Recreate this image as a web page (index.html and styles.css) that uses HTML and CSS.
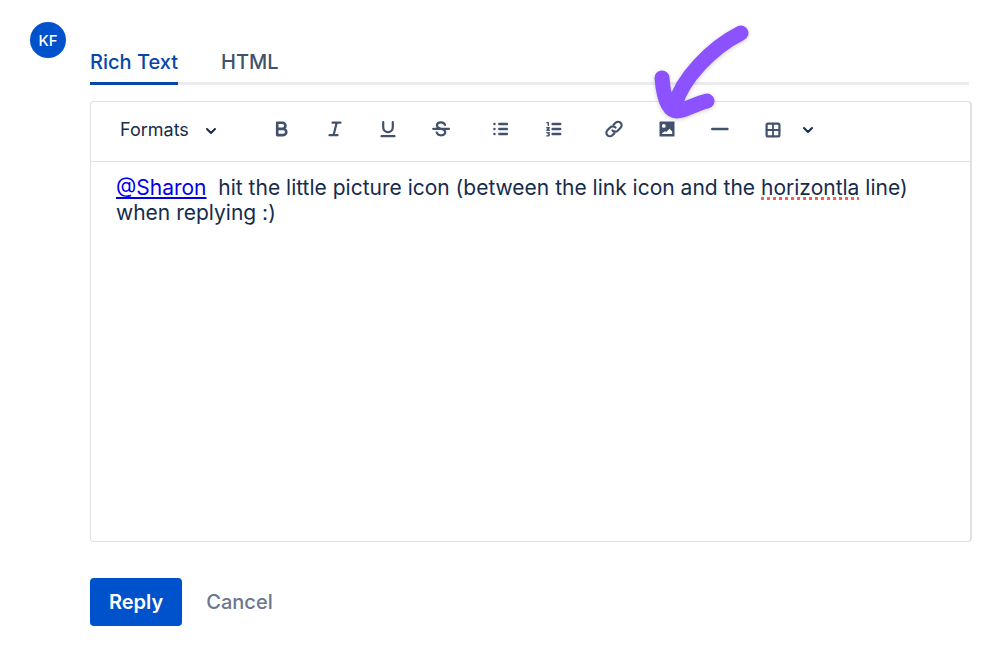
FILE: index.html
```html
<!DOCTYPE html>
<html lang="en">
<head>
<meta charset="UTF-8">
<meta name="viewport" content="width=device-width, initial-scale=1.0">
<title>Reply</title>
<link rel="stylesheet" href="styles.css">
</head>
<body>

<form class="reply">
    <div class="avatar">KF</div>

    <div class="main">
        <div class="tabs" role="tablist">
            <button type="button" class="tab active" role="tab" aria-selected="true">Rich Text</button>
            <button type="button" class="tab" role="tab" aria-selected="false">HTML</button>
        </div>

        <div class="editor">
            <div class="toolbar" role="toolbar" aria-label="Formatting">
                <div class="formats">
                    <select aria-label="Formats">
                        <option>Formats</option>
                    </select>
                    <svg class="chevron" width="12" height="8" viewBox="0 0 12 8"><path d="M2 2l4 4 4-4"/></svg>
                </div>

                <div class="group">
                    <button type="button" class="tool" aria-label="Bold">
                        <svg width="20" height="20" viewBox="0 0 20 20"><path stroke-width="2.6" d="M5.2 3.8h5.3a2.9 2.9 0 0 1 0 5.9H5.2zM5.2 9.9h6a3.1 3.1 0 0 1 0 6.2h-6z"/></svg>
                    </button>
                    <button type="button" class="tool" aria-label="Italic">
                        <svg width="20" height="20" viewBox="0 0 20 20"><path stroke-width="2.2" d="M7.5 3.7h8M4.5 16.2h8M11.7 3.7L8.6 16"/></svg>
                    </button>
                    <button type="button" class="tool" aria-label="Underline">
                        <svg width="20" height="20" viewBox="0 0 20 20"><path stroke-width="2.2" d="M5.2 3v5.3a4.8 4.8 0 0 0 9.6 0V3M3.5 17.2h13"/></svg>
                    </button>
                    <button type="button" class="tool" aria-label="Strikethrough">
                        <svg width="20" height="20" viewBox="0 0 20 20"><path stroke-width="2.2" d="M14 5.9C13.4 4.3 12 3.4 10 3.4c-2.4 0-4 1.2-4 3 0 1.8 1.3 2.7 4 3.4 2.9.8 4.2 1.7 4.2 3.3 0 1.9-1.7 3.2-4.2 3.2-2.1 0-3.7-1-4.3-2.8M2.2 9.8h15.8"/></svg>
                    </button>
                </div>

                <div class="group">
                    <button type="button" class="tool" aria-label="Bullet list">
                        <svg width="20" height="20" viewBox="0 0 20 20"><path stroke-width="2.4" d="M8.3 5h7.6M8.3 10h7.6M8.3 15h7.6M3.4 5h.1M3.4 10h.1M3.4 15h.1"/></svg>
                    </button>
                    <button type="button" class="tool" aria-label="Numbered list">
                        <svg width="20" height="20" viewBox="0 0 20 20"><path stroke-width="2.4" d="M8.6 5h7.6M8.6 10h7.6M8.6 15h7.6"/><path stroke-width="1.4" d="M2.8 3.6h1.5v2.8M2.8 8.8h2.5L2.9 11.2h2.5M2.8 13.6h2.5l-1.2 1.3c1.8 0 1.5 2-.1 2H2.8"/></svg>
                    </button>
                </div>

                <div class="group">
                    <button type="button" class="tool" aria-label="Link">
                        <svg width="20" height="20" viewBox="0 0 24 24"><path stroke-width="2.6" d="M10.2 13.7a4.3 4.3 0 0 0 6.2.3l3.5-3.5a4.2 4.2 0 0 0-6-6L11.5 6.9M13.8 10.3a4.3 4.3 0 0 0-6.2-.3l-3.5 3.5a4.2 4.2 0 0 0 6 6l2.3-2.3"/></svg>
                    </button>
                    <div class="pointed">
                        <button type="button" class="tool" aria-label="Image">
                            <svg width="20" height="20" viewBox="0 0 20 20"><path class="solid" fill-rule="evenodd" d="M3 2.500h14a.5.5 0 0 1 .5.5v14a.5.5 0 0 1-.5.5H3a.5.5 0 0 1-.5-.5V3a.5.5 0 0 1 .5-.5zM6.800 5a1.900 1.900 0 1 0 0 3.800 1.900 1.900 0 0 0 0-3.800zM5 15h10.200v-2.600l-2.600-2.600-3.500 3.200-1.200-.8L5 14.200z"/></svg>
                        </button>
                        <svg class="arrow" width="106" height="106" viewBox="650 20 106 106"><path d="M741 34C711 49 682 80 675 106M662 79C663 92 666 112 677 112C685 112 694 105 707 102"/></svg>
                    </div>
                    <button type="button" class="tool" aria-label="Horizontal line">
                        <svg width="20" height="20" viewBox="0 0 20 20"><path stroke-width="2.4" d="M2.2 10h15.2"/></svg>
                    </button>
                    <button type="button" class="tool" aria-label="Table">
                        <svg width="20" height="20" viewBox="0 0 20 20"><rect x="3.6" y="4.6" width="12.800" height="12.800" rx="1.5" stroke-width="2.2"/><path stroke-width="1.800" d="M10 4.6v12.800M3.6 11h12.800"/></svg>
                    </button>
                    <button type="button" class="more" aria-label="More">
                        <svg class="chevron" width="12" height="8" viewBox="0 0 12 8"><path d="M2 2l4 4 4-4"/></svg>
                    </button>
                </div>
            </div>

            <div class="content" contenteditable="true" spellcheck="false" role="textbox" aria-multiline="true" aria-label="Reply text"><a href="#sharon">@Sharon</a>&nbsp; hit the little picture icon (between the link icon and the <span class="misspelled">horizontla</span> line) when replying :)</div>
        </div>

        <div class="actions">
            <button type="submit" class="button">Reply</button>
            <button type="button" class="cancel">Cancel</button>
        </div>
    </div>
</form>

</body>
</html>
```
FILE: styles.css
```css
* {
    box-sizing: border-box;
}
body {
    margin: 0;
    background-color: #ffffff;
    font-family: Inter, "Liberation Sans", sans-serif;
    color: #172b4d;
}
button, select {
    font-family: inherit;
    background: none;
    border: none;
    padding: 0;
    margin: 0;
    cursor: pointer;
}
.reply {
    display: flex;
    align-items: flex-start;
    gap: 24px;
    padding: 22px 27px 26px 30px;
}
.avatar {
    display: flex;
    justify-content: center;
    align-items: center;
    flex: none;
    width: 36px;
    height: 36px;
    border-radius: 50%;
    background-color: #0052cc;
    color: #ffffff;
    font-size: 15px;
    font-weight: 500;
}
.main {
    flex: 1;
    min-width: 0;
}

/* Tabs */
.tabs {
    display: flex;
    gap: 43px;
    margin: 22px 3px 16px 0;
    box-shadow: inset 0 -3px #ebecf0;
}
.tab {
    height: 41px;
    padding-bottom: 3px;
    border-bottom: 3px solid transparent;
    font-size: 20px;
    font-weight: 500;
    color: #42526e;
}
.tab.active {
    color: #0747a6;
    border-bottom-color: #0747a6;
}

/* Editor */
.editor {
    border: 1px solid #dfe1e6;
    border-right-width: 2px;
    border-radius: 4px;
}
.toolbar {
    display: flex;
    align-items: center;
    gap: 7px;
    height: 60px;
    padding: 0 29px 5px;
    border-bottom: 1px solid #dfe1e6;
}
.formats {
    display: grid;
    align-items: center;
    width: 97px;
    margin-right: 31px;
}
.formats select, .formats svg {
    grid-area: 1 / 1;
}
.formats select {
    appearance: none;
    width: 100%;
    height: 32px;
    font-size: 18px;
    color: #172b4d;
}
.formats svg {
    justify-self: end;
    margin-top: 4px;
    pointer-events: none;
}
.group {
    display: flex;
    align-items: center;
}
.tool {
    display: flex;
    justify-content: center;
    align-items: center;
    width: 53px;
    height: 40px;
}
.more {
    display: flex;
    justify-content: center;
    align-items: center;
    width: 18px;
    height: 40px;
    padding-top: 2px;
}
.toolbar svg {
    fill: none;
    stroke: #42526e;
    stroke-linecap: round;
    stroke-linejoin: round;
}
.toolbar .solid {
    fill: #42526e;
    stroke: none;
}
.toolbar .chevron {
    stroke: #172b4d;
    stroke-width: 2;
}

/* Hand drawn arrow over the image button */
.pointed {
    position: relative;
}
.toolbar .arrow {
    position: absolute;
    left: 10px;
    bottom: 24px;
    z-index: 1;
    stroke: #8c52ff;
    stroke-width: 15;
    filter: drop-shadow(0 1px 2px rgba(0, 0, 0, 0.2));
    pointer-events: none;
}

.content {
    min-height: 379px;
    padding: 13px 25px;
    font-size: 21px;
    line-height: 25px;
    outline: none;
}
.content a {
    color: #0000ee;
}
.misspelled {
    text-decoration: underline dotted #ff5a52 3px;
    text-underline-offset: 2px;
    text-decoration-skip-ink: none;
}

/* Buttons */
.actions {
    display: flex;
    align-items: center;
    gap: 24px;
    margin-top: 36px;
}
.button {
    height: 48px;
    padding: 0 19px;
    border-radius: 4px;
    background-color: #0052cc;
    color: #ffffff;
    font-size: 20px;
    font-weight: 600;
}
.button:hover {
    background-color: #0065ff;
}
.cancel {
    color: #6b778c;
    font-size: 20px;
    font-weight: 500;
}
```
